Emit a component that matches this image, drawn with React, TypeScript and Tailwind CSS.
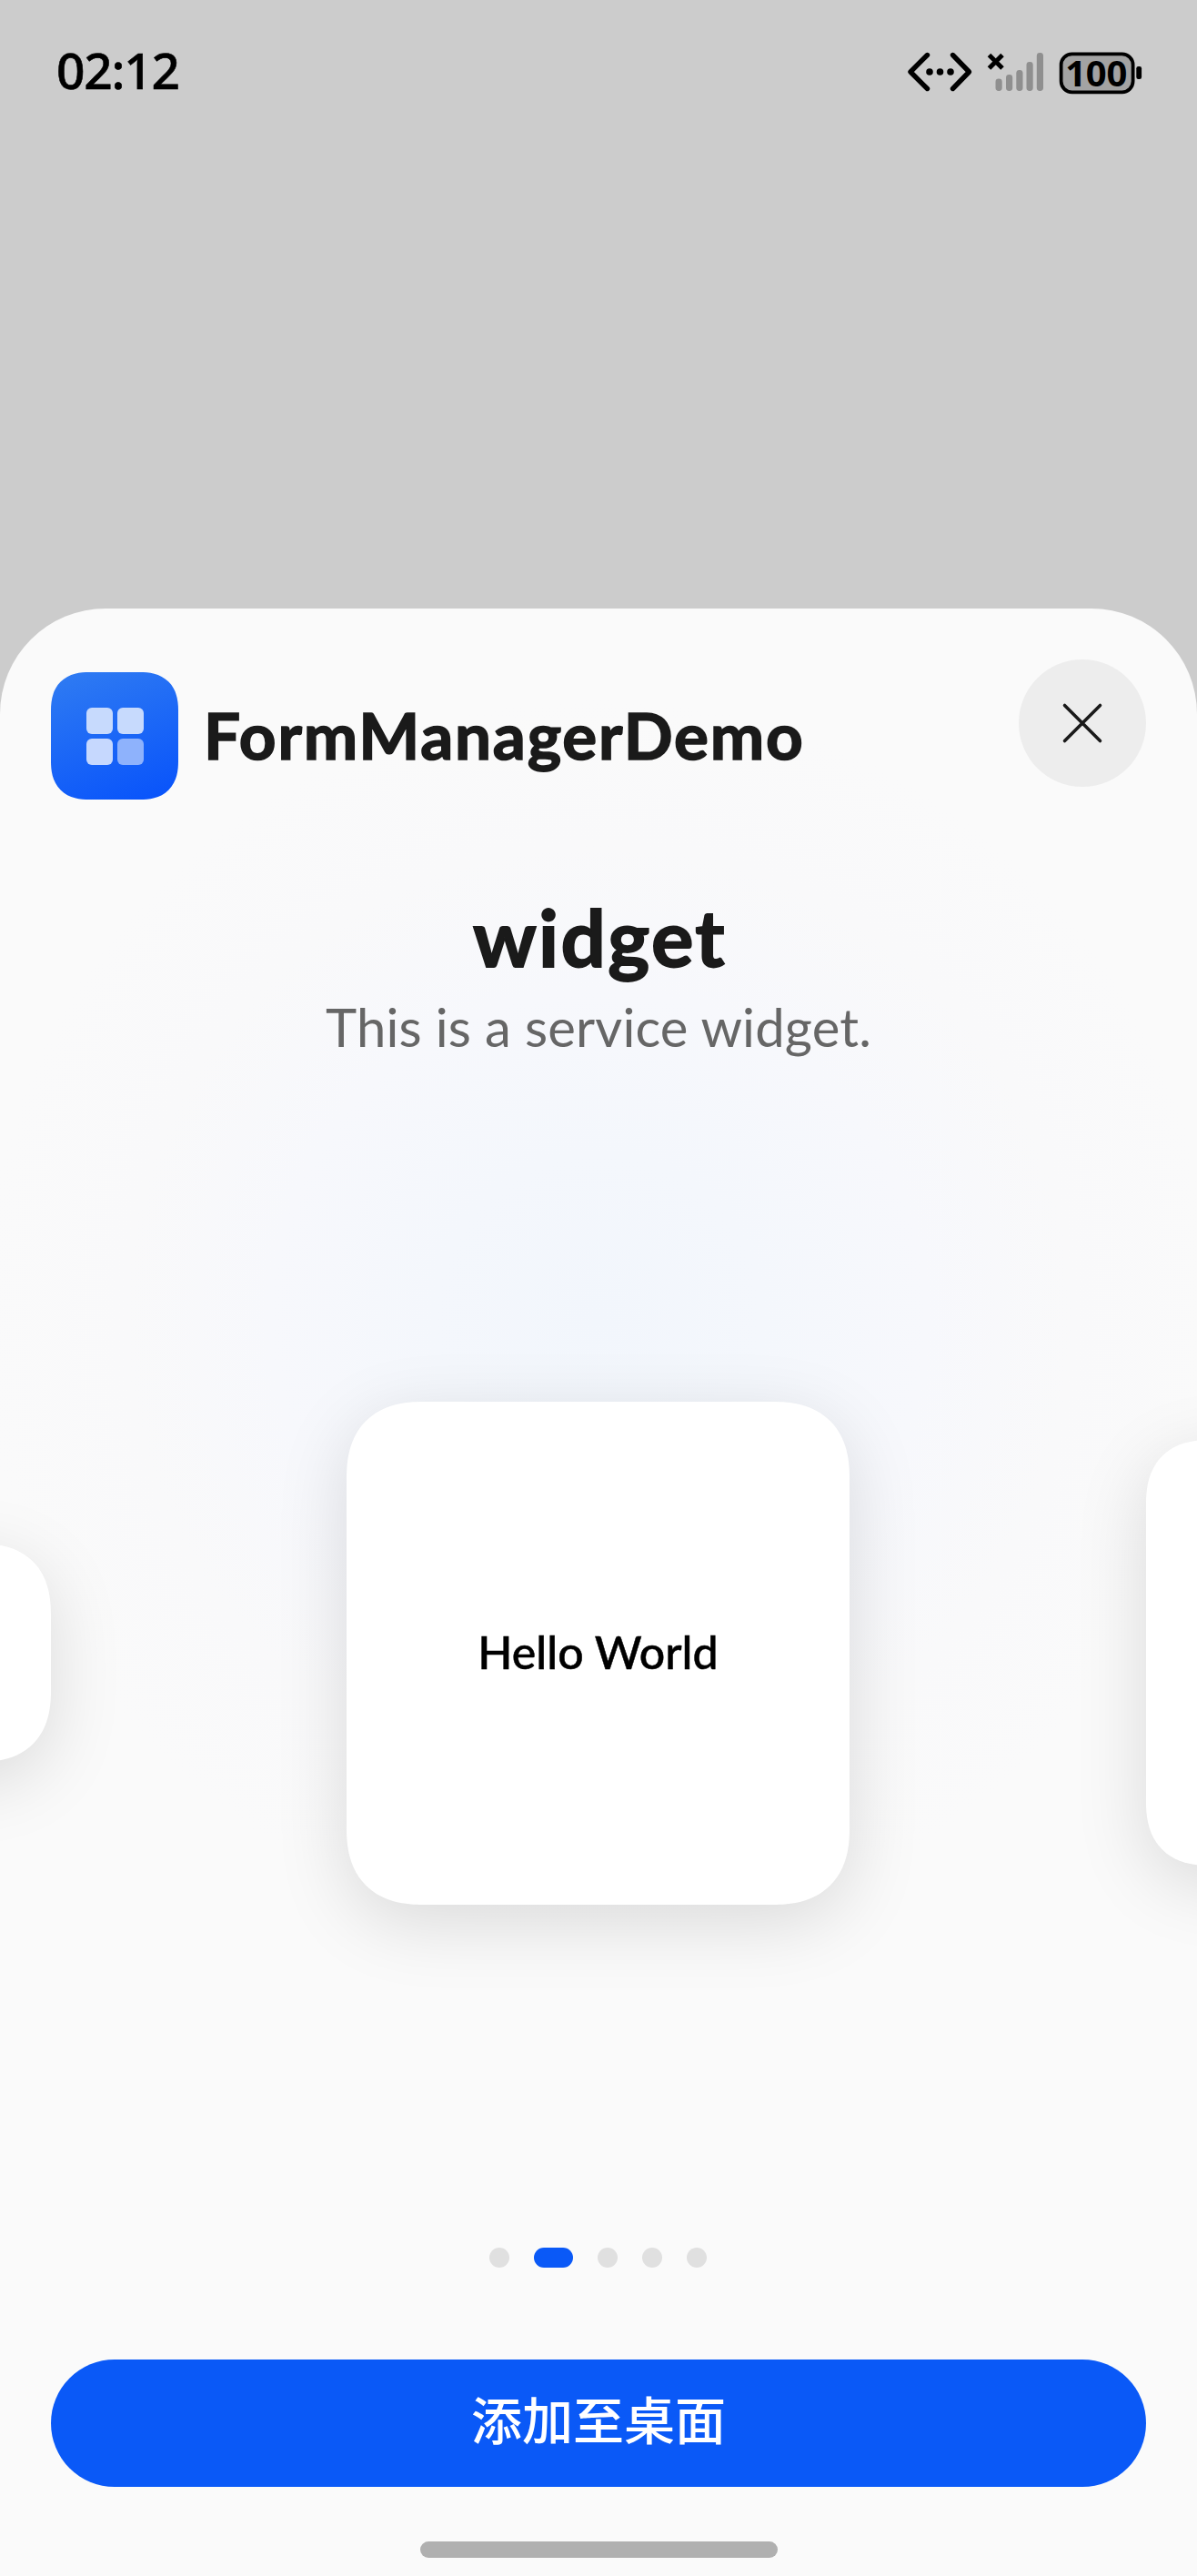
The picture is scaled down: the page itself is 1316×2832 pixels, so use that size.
const latin = "font-['Lato','Noto_Sans_CJK_SC',sans-serif]";

function StatusIcons() {
  return (
    <svg className="h-[60px] w-[270px]" viewBox="990 50 270 60" fill="none">
      <g stroke="#000" strokeWidth="5.4" strokeLinecap="round" strokeLinejoin="round">
        <path d="M1019.5 60.5 1001 79 1019.5 97.5" />
        <path d="M1047.5 60.5 1065.5 79 1047.5 97.5" />
      </g>
      <g fill="#000">
        <circle cx="1022" cy="79" r="3.8" />
        <circle cx="1033.5" cy="79" r="3.8" />
        <circle cx="1045" cy="79" r="3.8" />
      </g>
      <path d="M1087.5 60.5 1102 75M1102 60.5 1087.5 75" stroke="#000" strokeWidth="5" />
      <g fill="#8f8f8f">
        <rect x="1094.5" y="86.5" width="7.2" height="13.5" rx="3.4" />
        <rect x="1106" y="82" width="7.2" height="18" rx="3.4" />
        <rect x="1117.3" y="77" width="7.2" height="23" rx="3.4" />
        <rect x="1128.5" y="68" width="7.2" height="32" rx="3.4" />
        <rect x="1139.8" y="58" width="7.2" height="42" rx="3.4" />
      </g>
      <rect x="1166.6" y="59.3" width="79" height="42" rx="12" fill="#a3a3a3" stroke="#000" strokeWidth="3.8" />
      <rect x="1249.3" y="73" width="5.8" height="14" rx="2.2" fill="#000" />
      <text x="1205.3" y="94.6" fontFamily="'Noto Sans', sans-serif" fontSize="40" fontWeight="700" textAnchor="middle" fill="#000" textLength="68">
        100
      </text>
    </svg>
  );
}

function AppIcon() {
  return (
    <div className="mt-[14px] grid h-[140px] w-[140px] shrink-0 grid-cols-[29px_29px] grid-rows-[29px_29px] place-content-center gap-[5px] rounded-[42px] bg-linear-[160deg,#307cf2_0%,#0752fb_100%] [corner-shape:superellipse(1.25)]">
      <div className="rounded-[6px] bg-[#c7dafd]" />
      <div className="rounded-[6px] bg-[#c7dafd]" />
      <div className="rounded-[6px] bg-[#c6d8fe]" />
      <div className="rounded-[6px] bg-[#8eb2fc]" />
    </div>
  );
}

const cardClass =
  "shrink-0 bg-white shadow-[0_20px_80px_rgba(0,0,0,0.13)] [corner-shape:superellipse(1.25)]";

export default function App() {
  return (
    <div className={`flex h-[2832px] w-[1316px] flex-col overflow-hidden bg-[#cccccc] ${latin}`}>
      <div className="flex h-[669px] shrink-0 items-start justify-between pt-[46px] pr-14 pl-[62px]">
        <span className="mt-px font-['Noto_Sans',sans-serif] text-[55px] leading-[60px] font-medium tracking-[-1.2px] text-black [-webkit-text-stroke:0.6px_#000]">
          02:12
        </span>
        <div className="mt-1">
          <StatusIcons />
        </div>
      </div>

      <div className="flex grow flex-col overflow-hidden rounded-t-[116px] bg-[#fafafa] bg-[radial-gradient(circle_at_658px_780px,#f2f6fc_0px,#f4f7fc_180px,#f7f8fc_360px,#f9f9fa_520px,#fafafa_680px)]">
        <header className="flex h-[310px] shrink-0 items-start px-14 pt-14">
          <AppIcon />
          <h1 className="mt-[33px] ml-[28px] text-[71px] leading-[100px] font-bold tracking-[1.8px] text-[#1a1a1a] [-webkit-text-stroke:1.6px_#1a1a1a]">
            FormManagerDemo
          </h1>
          <button className="ml-auto flex h-[140px] w-[140px] items-center justify-center rounded-full bg-[#ededed]">
            <svg className="h-12 w-12" viewBox="0 0 48 48" stroke="#1a1a1a" strokeWidth="3.6" strokeLinecap="round">
              <path d="M4.5 4.5 43.5 43.5M43.5 4.5 4.5 43.5" />
            </svg>
          </button>
        </header>

        <h2 className="h-[100px] shrink-0 pl-[3px] text-center text-[87px] leading-[102px] font-bold tracking-[2.4px] text-[#1a1a1a] [-webkit-text-stroke:1.8px_#1a1a1a]">
          widget
        </h2>
        <p className="mt-[9px] h-20 shrink-0 text-center text-[58px] leading-[82px] tracking-[0.15px] text-[#666666]">
          This is a service widget.
        </p>

        <div className="mt-[373px] -ml-[497px] flex h-[553px] shrink-0 items-center gap-[326px]">
          <div className={`-mt-px h-[240px] w-[553px] rounded-[78px] ${cardClass}`} />
          <div className={`-ml-[1px] flex h-[553px] w-[553px] items-center justify-center rounded-[84px] ${cardClass}`}>
            <span className="-mt-[4px] text-[50px] leading-[60px] font-medium text-black [-webkit-text-stroke:0.5px_#000]">
              Hello World
            </span>
          </div>
          <div className={`-mt-px h-[468px] w-[468px] rounded-[70px] ${cardClass}`} />
        </div>

        <div className="mt-[377px] flex h-[22px] shrink-0 justify-center gap-[27px] pr-px">
          <i className="w-[22px] rounded-full bg-[#e0e0e0]" />
          <i className="w-[43px] rounded-full bg-[#0a59f7]" />
          <i className="w-[22px] rounded-full bg-[#e0e0e0]" />
          <i className="w-[22px] rounded-full bg-[#e0e0e0]" />
          <i className="w-[22px] rounded-full bg-[#e0e0e0]" />
        </div>

        <button className="mx-14 mt-[101px] flex h-[140px] shrink-0 items-center justify-center rounded-full bg-[#0a59f7] font-['Noto_Sans_CJK_SC',sans-serif] text-[56px] leading-[80px] font-medium text-white">
          <span className="-mt-[12px]">添加至桌面</span>
        </button>

        <div className="mx-auto mt-[60px] h-[18px] w-[393px] shrink-0 rounded-full bg-[#b0b0b0]" />
      </div>
    </div>
  );
}
